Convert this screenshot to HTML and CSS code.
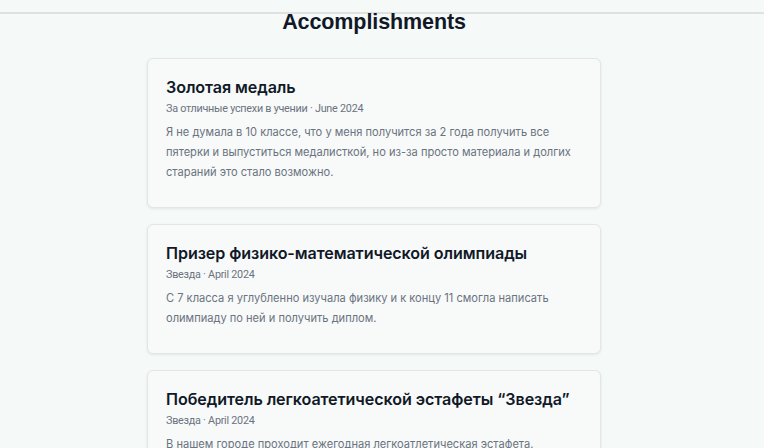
FILE: index.html
```html
<!DOCTYPE html>
<html lang="ru">
<head>
<meta charset="utf-8">
<link rel="stylesheet" href="styles.css">
</head>
<body>
<div class="topbar"></div>
<main class="page">
  <h2 class="section-title">Accomplishments</h2>
  <div class="list">
    <article class="card">
      <h3 class="card-title">Золотая медаль</h3>
      <p class="card-meta">За отличные успехи в учении · June 2024</p>
      <p class="card-text">Я не думала в 10 классе, что у меня получится за 2 года получить все пятерки и выпуститься медалисткой, но из-за просто материала и долгих стараний это стало возможно.</p>
    </article>
    <article class="card">
      <h3 class="card-title">Призер физико-математической олимпиады</h3>
      <p class="card-meta">Звезда · April 2024</p>
      <p class="card-text">С 7 класса я углубленно изучала физику и к концу 11 смогла написать олимпиаду по ней и получить диплом.</p>
    </article>
    <article class="card">
      <h3 class="card-title">Победитель легкоатетической эстафеты “Звезда”</h3>
      <p class="card-meta">Звезда · April 2024</p>
      <p class="card-text">В нашем городе проходит ежегодная легкоатлетическая эстафета.</p>
    </article>
  </div>
</main>
</body>
</html>
```

FILE: styles.css
```css
html, body {
  margin: 0;
  padding: 0;
}
body {
  background: #f5f9f7;
  font-family: Inter, "Noto Sans", sans-serif;
  overflow: hidden;
  height: 448px;
}
.topbar {
  height: 12px;
  border-bottom: 2px solid #dfe2e1;
}
.page {
  padding-right: 16px;
  display: flex;
  flex-direction: column;
  align-items: center;
}
.section-title {
  margin: 0;
  font-family: "Liberation Sans", Arial, sans-serif;
  font-weight: 700;
  font-size: 21.5px;
  line-height: 17px;
  color: #111827;
  letter-spacing: -0.1px;
}
.list {
  margin-top: 27px;
  display: flex;
  flex-direction: column;
  gap: 16px;
  width: 454px;
}
.card {
  box-sizing: border-box;
  background: #f7faf9;
  border: 1px solid #e2e6e5;
  border-radius: 6px;
  box-shadow: 0 1px 3px rgba(0, 0, 0, 0.08);
  padding: 17px 18px 25px 18px;
}
.card-title {
  margin: 0;
  font-size: 16.1px;
  font-weight: 600;
  line-height: 22px;
  color: #111827;
  letter-spacing: -0.08px;
}
.card-meta {
  margin: 1px 0 0 0;
  font-family: Roboto, "Liberation Sans", sans-serif;
  font-size: 10.8px;
  line-height: 20px;
  letter-spacing: -0.25px;
  color: #6b7280;
}
.card-text {
  margin: 3px 0 0 0;
  font-size: 11.1px;
  line-height: 20px;
  color: #6b7280;
}
```
